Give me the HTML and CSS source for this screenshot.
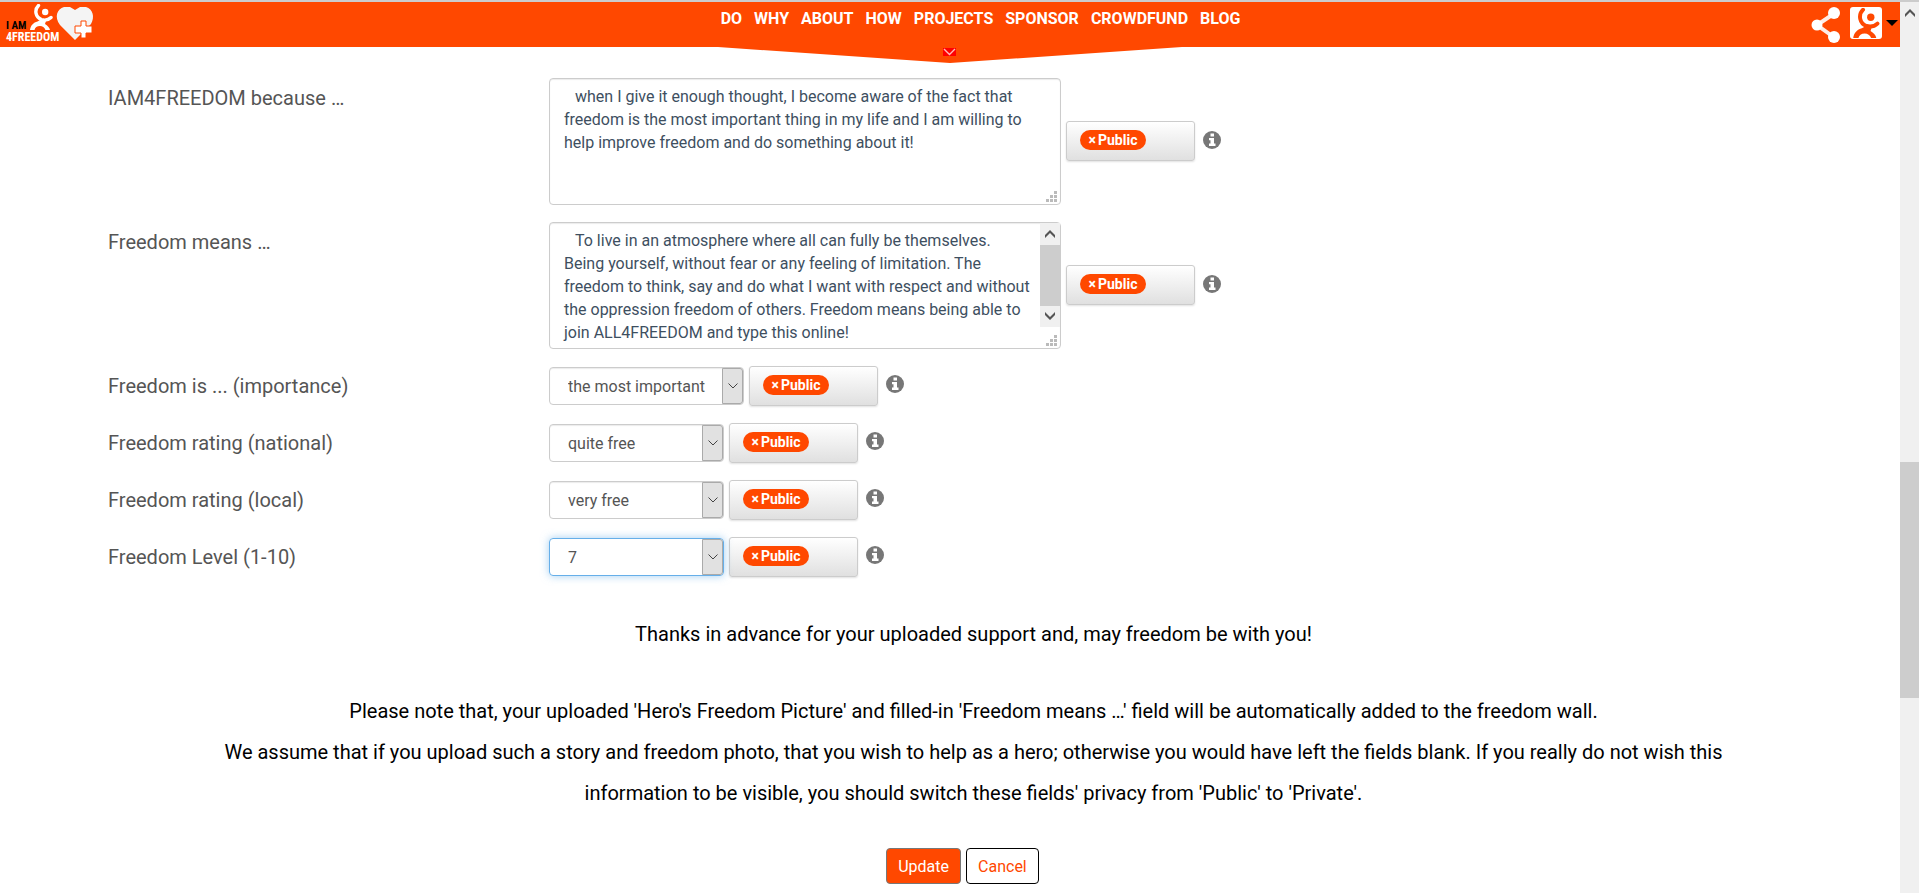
FILE: index.html
```html
<!DOCTYPE html>
<html lang="en">
<head>
<meta charset="utf-8">
<title>I AM 4 FREEDOM</title>
<link rel="stylesheet" href="styles.css">
</head>
<body>
<svg class="defs" aria-hidden="true">
  <symbol id="figure" viewBox="0 0 24 26">
    <path d="M9 1.500C4.500 6 6 13.500 12 15.600c3.500 1 7 .3 9.500-2.100" fill="none" stroke="currentColor" stroke-width="3.400" stroke-linecap="round"/>
    <circle cx="15.700" cy="8" r="3.200" fill="currentColor"/>
    <path d="M.5 26c.5-4.500 3.500-7.500 7.500-8.500l3.500-2 5 1.500-1 3c2.500 1.500 4.500 3.500 5 6h-4.500c-1-2.700-3-4-5.500-4-3 0-5 1.500-5.500 4z" fill="currentColor"/>
  </symbol>
  <symbol id="info" viewBox="0 0 18 18">
    <circle cx="9" cy="9" r="9" fill="#777"/>
    <path d="M7.500 2.500h3.500v3H7.500zM6 7h5v5.500h1.500V15H6v-2.500h1.500V9.200H6z" fill="#fff"/>
  </symbol>
  <symbol id="down" viewBox="0 0 10 6"><path d="M.5.5 5 5 9.500.5" fill="none" stroke="currentColor"/></symbol>
  <symbol id="grip" viewBox="0 0 12 12"><path d="M9 0h3v3H9zM5 4h3v3H5zM9 4h3v3H9zM1 8h3v3H1zM5 8h3v3H5zM9 8h3v3H9z" fill="#bbb"/></symbol>
  <symbol id="thick" viewBox="0 0 10 8"><path d="M0 5 5 0l5 5v3L5 3 0 8z" fill="#555"/></symbol>
</svg>

<header class="topbar">
  <a class="brand" href="#" aria-label="I am 4 freedom">
    <svg class="logo" viewBox="0 0 96 44">
      <text class="logo-iam" x="6" y="27">I AM</text>
      <text class="logo-free" x="6" y="39">4FREEDOM</text>
      <use href="#figure" x="29" y="2" width="25" height="26"/>
      <path d="M75 38 60 23C54 15 57 7 64 5h6l5 3 5-3h6c7 2 9 10 5 17z" fill="#f4f4f4"/>
      <path d="M81 19h5v5h6v7h-6v5h-5v-5h-6v-7h6z" fill="#fff" stroke="#ff4800" stroke-width="1"/>
    </svg>
  </a>
  <nav class="menu">
    <a href="#">DO</a><a href="#">WHY</a><a href="#">ABOUT</a><a href="#">HOW</a><a href="#">PROJECTS</a><a href="#">SPONSOR</a><a href="#">CROWDFUND</a><a href="#">BLOG</a>
  </nav>
  <div class="tools">
    <button class="tool" aria-label="Share">
      <svg width="30" height="36" viewBox="0 0 30 36"><path d="M24 6 6 18l18 13" fill="none" stroke="#fff" stroke-opacity=".9" stroke-width="4"/><g fill="#fff"><circle cx="23" cy="6" r="6"/><circle cx="6" cy="18" r="5.500"/><circle cx="23" cy="30" r="6"/></g></svg>
    </button>
    <button class="tool account" aria-label="Account">
      <span class="avatar"><svg width="29" height="30"><use href="#figure"/></svg></span>
      <svg width="12" height="6" viewBox="0 0 12 6"><path d="M0 0h12L6 6z" fill="#000"/></svg>
    </button>
  </div>
  <button class="pull" aria-label="Expand menu">
    <svg class="wedge" viewBox="0 0 464 16" preserveAspectRatio="none"><path d="M0 0h464L232 16z" fill="#ff4800"/></svg>
    <svg class="pull-mark" width="13" height="8" viewBox="0 0 13 8"><path d="M0 0h13v8H0z" fill="#f00"/><path d="m1 1 5.500 5.500L12 1" fill="none" stroke="#fbb" stroke-width="1.400"/></svg>
  </button>
</header>

<div class="page-scroll" aria-hidden="true">
  <svg width="10" height="8"><use href="#thick"/></svg>
  <div class="page-thumb"></div>
</div>

<main>
  <form class="fields">
    <div class="row tall">
      <label for="because">IAM4FREEDOM because …</label>
      <div class="area">
        <textarea id="because">when I give it enough thought, I become aware of the fact that freedom is the most important thing in my life and I am willing to help improve freedom and do something about it!</textarea>
        <svg class="grip" width="12" height="12"><use href="#grip"/></svg>
      </div>
      <div class="privacy"><button type="button" class="pill"><span>×</span> Public</button></div>
      <svg class="info" width="18" height="18"><use href="#info"/></svg>
    </div>
    <div class="row tall">
      <label for="means">Freedom means …</label>
      <div class="area">
        <textarea id="means">To live in an atmosphere where all can fully be themselves. Being yourself, without fear or any feeling of limitation. The freedom to think, say and do what I want with respect and without the oppression freedom of others. Freedom means being able to join ALL4FREEDOM and type this online!</textarea>
        <div class="area-scroll" aria-hidden="true">
          <svg width="10" height="8"><use href="#thick"/></svg>
          <div class="area-thumb"></div>
          <svg class="flip" width="10" height="8"><use href="#thick"/></svg>
        </div>
        <svg class="grip" width="12" height="12"><use href="#grip"/></svg>
      </div>
      <div class="privacy"><button type="button" class="pill"><span>×</span> Public</button></div>
      <svg class="info" width="18" height="18"><use href="#info"/></svg>
    </div>
    <div class="row">
      <label for="importance">Freedom is ... (importance)</label>
      <div class="choice wide"><select id="importance"><option>the most important</option></select><span class="arrow"><svg width="10" height="6"><use href="#down"/></svg></span></div>
      <div class="privacy"><button type="button" class="pill"><span>×</span> Public</button></div>
      <svg class="info" width="18" height="18"><use href="#info"/></svg>
    </div>
    <div class="row">
      <label for="national">Freedom rating (national)</label>
      <div class="choice"><select id="national"><option>quite free</option></select><span class="arrow"><svg width="10" height="6"><use href="#down"/></svg></span></div>
      <div class="privacy"><button type="button" class="pill"><span>×</span> Public</button></div>
      <svg class="info" width="18" height="18"><use href="#info"/></svg>
    </div>
    <div class="row">
      <label for="local">Freedom rating (local)</label>
      <div class="choice"><select id="local"><option>very free</option></select><span class="arrow"><svg width="10" height="6"><use href="#down"/></svg></span></div>
      <div class="privacy"><button type="button" class="pill"><span>×</span> Public</button></div>
      <svg class="info" width="18" height="18"><use href="#info"/></svg>
    </div>
    <div class="row">
      <label for="level">Freedom Level (1-10)</label>
      <div class="choice active"><select id="level"><option>7</option></select><span class="arrow"><svg width="10" height="6"><use href="#down"/></svg></span></div>
      <div class="privacy"><button type="button" class="pill"><span>×</span> Public</button></div>
      <svg class="info" width="18" height="18"><use href="#info"/></svg>
    </div>
  </form>
  <section class="notes">
    <p class="thanks">Thanks in advance for your uploaded support and, may freedom be with you!</p>
    <p>Please note that, your uploaded 'Hero's Freedom Picture' and filled-in 'Freedom means …' field will be automatically added to the freedom wall.<br>We assume that if you upload such a story and freedom photo, that you wish to help as a hero; otherwise you would have left the fields blank. If you really do not wish this information to be visible, you should switch these fields' privacy from 'Public' to 'Private'.</p>
  </section>
  <div class="actions">
    <button class="btn update">Update</button>
    <button class="btn cancel">Cancel</button>
  </div>
</main>
</body>
</html>
```

FILE: styles.css
```css
* { box-sizing: border-box; }

body {
  margin: 0;
  padding-right: 19px;
  background: #fff;
  color: #000;
  font-family: Roboto, "Liberation Sans", sans-serif;
  font-size: 16px;
  overflow: hidden;
}

button, select, textarea { font: inherit; }
svg { display: block; }
.defs { position: absolute; width: 0; height: 0; }

/* Header */
.topbar {
  position: relative;
  display: grid;
  grid-template-columns: 1fr auto 1fr;
  height: 47px;
  border-top: 2px solid #ccc;
  background: #ff4800;
}
.logo { width: 96px; height: 44px; color: #fff; }
.logo-iam, .logo-free { font-family: "Liberation Sans Narrow", "Roboto Condensed", Roboto, sans-serif; font-weight: 700; }
.logo-iam { font-size: 11px; fill: #000; }
.logo-free { font-size: 12px; fill: #fff; }
.menu { display: flex; gap: 12px; padding: 8px 0 0 61px; line-height: 18px; font-size: 16px; font-weight: 700; }
.menu a { color: #fff; text-decoration: none; }
.tools { display: flex; justify-content: flex-end; align-items: flex-start; gap: 9px; padding: 5px 2px 0 0; }
.tool { padding: 0; border: 0; background: none; }
.account { display: flex; align-items: center; gap: 4px; }
.avatar { display: grid; place-items: center; width: 32px; height: 32px; border-radius: 3px; background: #fff; color: #ff4800; }
.pull { position: absolute; top: 45px; left: 50%; width: 464px; height: 16px; padding: 0; border: 0; background: none; transform: translateX(-50%); }
.wedge { width: 100%; height: 16px; }
.pull-mark { position: absolute; top: 1px; left: 225px; }

/* Page scrollbar */
.page-scroll { position: fixed; top: 0; right: 0; bottom: 0; width: 19px; padding: 7px 0 0; border-top: 2px solid #ccc; background: #f0f0f0; }
.page-scroll svg { margin: 0 auto; }
.page-thumb { position: absolute; top: 51.6%; left: 0; width: 100%; height: 26.5%; background: #cdcdcd; }

/* Form */
main { padding: 31px 61px 0 108px; }
.fields { display: grid; gap: 17px; }
.row { display: grid; grid-template-columns: 441px auto 129px auto; justify-content: start; align-items: center; min-height: 40px; }
.row label { color: #555; font-size: 20px; line-height: 24px; }
.tall { align-items: start; }
.tall label { padding-top: 8px; }
.tall .privacy { margin-top: 43px; }
.tall .info { margin-top: 53px; }
.area { position: relative; width: 512px; height: 127px; }
textarea {
  display: block;
  width: 100%;
  height: 100%;
  padding: 6px 30px 4px 14px;
  border: 1px solid #ccc;
  border-radius: 4px;
  box-shadow: inset 0 1px 1px rgba(0, 0, 0, .08);
  color: #3e4f5f;
  line-height: 23px;
  text-indent: 11px;
  resize: none;
  overflow: hidden;
}
.grip { position: absolute; right: 4px; bottom: 2px; }
.area-scroll { position: absolute; top: 1px; right: 1px; display: flex; flex-direction: column; align-items: center; justify-content: space-between; width: 20px; height: 104px; padding: 7px 0; background: #f0f0f0; }
.area-thumb { width: 100%; height: 61px; background: #cdcdcd; }
.flip { transform: rotate(180deg); }

.privacy {
  width: 129px;
  height: 40px;
  margin-left: 5px;
  padding: 8px 13px;
  border: 1px solid #ccc;
  border-radius: 3px;
  background: linear-gradient(#fff, #e0e0e0);
  box-shadow: 0 1px 2px rgba(0, 0, 0, .12);
}
.pill { display: flex; align-items: center; justify-content: center; gap: 2px; width: 66px; height: 20px; padding: 0; border: 0; border-radius: 10px; background: #ff4800; color: #fff; font-size: 14px; font-weight: 700; line-height: 18px; }
.info { margin-left: 13px; }
.row:not(.tall) .info { margin-bottom: 4px; }

.choice { position: relative; width: 175px; height: 38px; border: 1px solid #ccc; border-radius: 4px; box-shadow: inset 0 1px 1px rgba(0, 0, 0, .08); }
.wide { width: 195px; }
.choice select { width: 100%; height: 100%; padding: 0 30px 0 18px; border: 0; outline: 0; background: none; color: #555; appearance: none; }
.arrow { position: absolute; top: 0; right: 0; bottom: 0; display: grid; place-items: center; width: 21px; border: 1px solid #aaa; border-radius: 0 3px 3px 0; background: #e1e1e1; color: #444; pointer-events: none; }
.active { border-color: #66afe9; box-shadow: 0 0 8px rgba(102, 175, 233, .6); }

/* Closing text */
.notes { padding: 37px 90px 0; text-align: center; font-size: 20px; line-height: 41px; }
.notes p { margin: 0; }
.notes .thanks { margin-bottom: 36px; }
.actions { display: flex; justify-content: center; gap: 5px; padding: 34px 22px 0 0; }
.btn { height: 36px; padding: 0 11px; border: 1px solid #777; border-radius: 4px; }
.update { background: #ff4800; color: #fff; }
.cancel { border-color: #000; background: #fff; color: #ff4800; }
```
